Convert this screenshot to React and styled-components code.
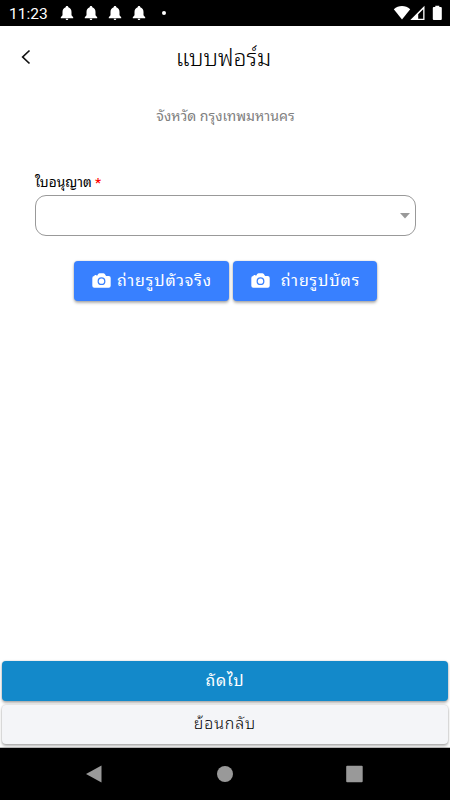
import styled, { createGlobalStyle } from "styled-components";
import { IoCamera } from "react-icons/io5";

const GlobalStyle = createGlobalStyle`
  * {
    box-sizing: border-box;
  }
  body {
    margin: 0;
    background: #fff;
    font-family: Roboto, "Noto Sans Thai Looped", "Noto Looped Thai", Loma, Waree, "Droid Sans Thai", "Noto Sans", sans-serif;
  }
`;

const Screen = styled.div`
  display: flex;
  flex-direction: column;
  width: 450px;
  height: 800px;
  overflow: hidden;
  background: #fff;
`;

const StatusBar = styled.div`
  display: flex;
  align-items: center;
  justify-content: space-between;
  height: 26px;
  padding: 0 5px 0 9px;
  background: #000;
  color: #fff;
`;

const StatusGroup = styled.div`
  display: flex;
  align-items: center;
`;

const Clock = styled.span`
  width: 39px;
  margin-right: 7px;
  padding-top: 2px;
  font-size: 15.5px;
  line-height: 24px;
  white-space: nowrap;
`;

const Dot = styled.span`
  width: 4px;
  height: 4px;
  margin-left: 11px;
  border-radius: 50%;
  background: #fff;
`;

const Header = styled.header`
  display: grid;
  grid-template-columns: 50px 1fr 54px;
  align-items: center;
  height: 65px;
`;

const BackButton = styled.button`
  display: flex;
  padding: 0 0 3px 20px;
  border: 0;
  background: none;
`;

const Title = styled.h1`
  margin: 0;
  padding-left: 1px;
  color: #000;
  font-size: 22.9px;
  font-weight: 300;
  line-height: 32px;
  text-align: center;
`;

const Province = styled.p`
  margin: 13px 0 0;
  padding-left: 1px;
  color: #808080;
  font-size: 14.1px;
  line-height: 24px;
  text-align: center;
`;

const Form = styled.form`
  flex: 1;
  padding: 44px 34px 0 35px;
`;

const Label = styled.label`
  display: block;
  color: #000;
  font-size: 13.7px;
  line-height: 20px;
`;

const Required = styled.span`
  color: #f00;
  font-weight: 500;
`;

const Select = styled.div`
  display: flex;
  align-items: center;
  justify-content: flex-end;
  height: 41px;
  margin-top: 3px;
  padding-right: 5px;
  border: 1px solid #999;
  border-radius: 11px;
`;

const Photos = styled.div`
  display: flex;
  justify-content: center;
  gap: 4px;
  margin-top: 25px;
`;

const Button = styled.button`
  display: flex;
  align-items: center;
  justify-content: center;
  gap: ${(props) => props.$gap || "0"};
  width: ${(props) => props.$width || "100%"};
  height: 39.5px;
  padding: 0;
  border: 0;
  border-radius: 4px;
  background: ${(props) => props.$background || "#3880ff"};
  color: ${(props) => props.$color || "#fff"};
  font-family: inherit;
  font-size: 16px;
  font-weight: ${(props) => props.$weight || 400};
  letter-spacing: 0.9px;
  line-height: 24px;
  white-space: nowrap;
  box-shadow: 0 2px 3px rgba(0, 0, 0, 0.3), 0 0 2px rgba(0, 0, 0, 0.2);
`;

const Footer = styled.footer`
  display: flex;
  flex-direction: column;
  gap: 4px;
  padding: 0 2px 3px;
  border-bottom: 1px solid #bbb;
`;

const NavBar = styled.nav`
  display: flex;
  align-items: center;
  justify-content: space-between;
  height: 52px;
  padding: 0 86px 0 85px;
  background: #000;
`;

function Bell() {
  return (
    <svg width="24" height="18" viewBox="-4 0 24 18" fill="#fff">
      <path d="M8 2c.8 0 1.300.5 1.300 1.300 2 .6 3.200 2.500 3.200 4.600v3.400l1.700 1.900v1H1.800v-1l1.700-1.900V7.900c0-2.100 1.200-4 3.200-4.600C6.700 2.500 7.200 2 8 2zM6.700 14.700h2.600c0 .8-.5 1.300-1.300 1.300s-1.300-.5-1.300-1.300z" />
    </svg>
  );
}

export default function App() {
  return (
    <Screen>
      <GlobalStyle />
      <StatusBar>
        <StatusGroup>
          <Clock>11:23</Clock>
          <Bell />
          <Bell />
          <Bell />
          <Bell />
          <Dot />
        </StatusGroup>
        <svg width="52" height="16" viewBox="0 0 52 16" fill="#fff">
          <path d="M.8 4.200C5.500 0 12.500 0 17.200 4.200L9 14.500z" />
          <path fillRule="evenodd" d="M17.300 15L31.500.8V15zm7.900-5.700v4.400h5V4.200z" />
          <path d="M42.300 2V.8h4V2H47.800a1 1 0 0 1 1 1v11a1 1 0 0 1-1 1h-7a1 1 0 0 1-1-1V3a1 1 0 0 1 1-1z" />
        </svg>
      </StatusBar>
      <Header>
        <BackButton aria-label="ย้อนกลับ">
          <svg width="12" height="16" viewBox="0 0 12 16" fill="none" stroke="#111" strokeWidth="1.700">
            <path d="M9.500 1.500L2.700 8l6.800 6.500" />
          </svg>
        </BackButton>
        <Title>แบบฟอร์ม</Title>
      </Header>
      <Province>จังหวัด กรุงเทพมหานคร</Province>
      <Form>
        <Label>
          ใบอนุญาต <Required>*</Required>
        </Label>
        <Select>
          <svg width="10" height="6" viewBox="0 0 10 6" fill="#999">
            <path d="M0 0h10L5 5.500z" />
          </svg>
        </Select>
        <Photos>
          <Button type="button" $width="155px" $gap="5px">
            <IoCamera size={21} />
            <span>ถ่ายรูปตัวจริง</span>
          </Button>
          <Button type="button" $width="144px" $gap="10px">
            <IoCamera size={21} />
            <span>ถ่ายรูปบัตร</span>
          </Button>
        </Photos>
      </Form>
      <Footer>
        <Button $background="#1389ca">ถัดไป</Button>
        <Button $background="#f4f5f8" $color="#000" $weight={300}>
          ย้อนกลับ
        </Button>
      </Footer>
      <NavBar>
        <svg width="18" height="18" viewBox="0 0 18 18" fill="#999">
          <path d="M1 9L16.500.5v17z" />
        </svg>
        <svg width="18" height="18" viewBox="0 0 18 18" fill="#999">
          <circle cx="9" cy="9" r="8" />
        </svg>
        <svg width="18" height="18" viewBox="0 0 18 18" fill="#999">
          <rect x=".2" y=".7" width="16.500" height="16.500" rx="1" />
        </svg>
      </NavBar>
    </Screen>
  );
}
